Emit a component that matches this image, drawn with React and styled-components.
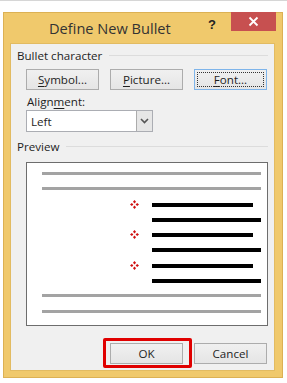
import React from "react";
import styled, { createGlobalStyle } from "styled-components";

const Global = createGlobalStyle`
  html, body { margin: 0; padding: 0; background: #ffffff; }
  body { font-family: "Open Sans", "Noto Sans", sans-serif; }
  * { box-sizing: border-box; }
`;

const Page = styled.div`
  width: 287px;
  height: 383px;
  overflow: hidden;
  background: #ffffff;
  border-top: 1px solid #d6d6d6;
  padding: 11px 4px 0 3px;
  position: relative;
`;

const Window = styled.div`
  width: 280px;
  height: 366px;
  background: #f0c96c;
  border: 1px solid #dcb154;
  display: flex;
  flex-direction: column;
  padding: 0 7px 6px 6px;
`;

const TitleBar = styled.div`
  height: 30px;
  display: flex;
  align-items: flex-start;
  flex-shrink: 0;
`;

const Title = styled.div`
  flex: 1;
  padding: 5px 0 0 39px;
  font-size: 14.6px;
  color: #333333;
`;

const Help = styled.div`
  width: 20px;
  padding-top: 4px;
  font-family: "Liberation Sans", Arial, sans-serif;
  font-weight: bold;
  font-size: 13px;
  color: #222;
  margin-right: 3px;
`;

const CloseBtn = styled.div`
  width: 45px;
  height: 19px;
  margin-top: -1px;
  margin-right: -1px;
  background: #c75050;
  display: flex;
  align-items: center;
  justify-content: center;
`;

const Client = styled.div`
  flex: 1;
  background: #f0f0f0;
  border: 1px solid #e2bb62;
  padding: 3px 6px 0 6px;
  display: flex;
  flex-direction: column;
  font-size: 11.6px;
  color: #1e1e1e;
`;

const GroupHeader = styled.div`
  display: flex;
  align-items: center;
  height: 17px;
  margin-top: ${(p) => p.$top || 0}px;
  &::after {
    content: "";
    flex: 1;
    height: 1px;
    background: #dcdcdc;
    margin-left: 7px;
  }
`;

const Row = styled.div`
  display: flex;
  gap: 11px;
  padding-left: ${(p) => p.$indent || 9}px;
  margin-top: ${(p) => p.$top || 0}px;
`;

const Button = styled.div`
  position: relative;
  width: 73px;
  height: 21px;
  border: 1px solid ${(p) => (p.$focus ? "#7eb4ea" : "#acacac")};
  background: linear-gradient(#f0f0f0, #e5e5e5);
  display: flex;
  align-items: center;
  justify-content: center;
  font-size: 11.6px;
  color: #1e1e1e;
  &::before {
    content: "";
    display: ${(p) => (p.$focus ? "block" : "none")};
    position: absolute;
    inset: 2px;
    border: 1px dotted #333;
  }
`;

const Highlight = styled.div`
  position: absolute;
  left: -8px;
  right: -10px;
  top: -6px;
  bottom: -5px;
  border: 3px solid #e00000;
  border-radius: 2px;
`;

const U = styled.span`
  text-decoration: underline;
  text-underline-offset: 2px;
`;

const Label = styled.div`
  padding-left: 10px;
  margin-top: ${(p) => p.$top || 0}px;
  height: 16px;
  display: flex;
  align-items: center;
`;

const Select = styled.div`
  margin: 1px 0 0 9px;
  width: 127px;
  height: 22px;
  background: #ffffff;
  border: 1px solid #abadb3;
  display: flex;
  align-items: stretch;
`;

const SelectValue = styled.div`
  flex: 1;
  padding-left: 4px;
  display: flex;
  align-items: center;
`;

const SelectArrow = styled.div`
  width: 16px;
  background: #e6e6e6;
  border-left: 1px solid #acacac;
  display: flex;
  align-items: center;
  justify-content: center;
`;

const PreviewBox = styled.div`
  margin: 7px 0 0 9px;
  width: 242px;
  height: 164px;
  background: #ffffff;
  border: 1px solid #6d6d6d;
  padding: 9px 6px 0 15px;
  display: flex;
  flex-direction: column;
`;

const LineRow = styled.div`
  height: 16px;
  display: flex;
  align-items: flex-start;
  padding-left: ${(p) => (p.$indent ? 110 : 0)}px;
  position: relative;
`;

const Line = styled.div`
  height: ${(p) => (p.$gray ? 3 : 4)}px;
  background: ${(p) => (p.$gray ? "#a3a3a3" : "#000000")};
  width: ${(p) => (p.$short ? "101px" : "100%")};
`;

const BulletMark = styled.svg`
  position: absolute;
  left: 88px;
  top: -3px;
`;

const Bullet = () => (
  <BulletMark width="9" height="9" viewBox="0 0 9 9">
    <g fill="#d01010">
      <path d="M4.5 0 L6 1.8 L4.5 3.4 L3 1.8 Z" />
      <path d="M4.5 5.6 L6 7.2 L4.5 9 L3 7.2 Z" />
      <path d="M0 4.5 L1.8 3 L3.4 4.5 L1.8 6 Z" />
      <path d="M5.6 4.5 L7.2 3 L9 4.5 L7.2 6 Z" />
    </g>
  </BulletMark>
);

const previewRows = [
  { gray: true },
  { gray: true },
  { bullet: true, short: true },
  {},
  { bullet: true, short: true },
  {},
  { bullet: true, short: true },
  {},
  { gray: true },
  { gray: true },
];

export default function App() {
  return (
    <>
      <Global />
      <Page>
        <Window>
          <TitleBar>
            <Title>Define New Bullet</Title>
            <Help>?</Help>
            <CloseBtn>
              <svg width="11" height="11" viewBox="0 0 11 11">
                <path d="M1.5 1.5 L9.5 9.5 M9.5 1.5 L1.5 9.5" stroke="#ffffff" strokeWidth="1.8" />
              </svg>
            </CloseBtn>
          </TitleBar>
          <Client>
            <GroupHeader>Bullet character</GroupHeader>
            <Row $top={5}>
              <Button><span><U>S</U>ymbol...</span></Button>
              <Button><span><U>P</U>icture...</span></Button>
              <Button $focus><span><U>F</U>ont...</span></Button>
            </Row>
            <Label $top={3}><span>Align<U>m</U>ent:</span></Label>
            <Select>
              <SelectValue>Left</SelectValue>
              <SelectArrow>
                <svg width="9" height="6" viewBox="0 0 9 6">
                  <path d="M1 1 L4.5 4.5 L8 1" fill="none" stroke="#555" strokeWidth="1.6" />
                </svg>
              </SelectArrow>
            </Select>
            <GroupHeader $top={6}>Preview</GroupHeader>
            <PreviewBox>
              {previewRows.map((r, i) => (
                <LineRow key={i} $indent={!r.gray}>
                  {r.bullet && <Bullet />}
                  <Line $gray={r.gray} $short={r.short} />
                </LineRow>
              ))}
            </PreviewBox>
            <Row $top={17} $indent={93}>
              <Button>
                OK
                <Highlight />
              </Button>
              <Button>Cancel</Button>
            </Row>
          </Client>
        </Window>
      </Page>
    </>
  );
}
